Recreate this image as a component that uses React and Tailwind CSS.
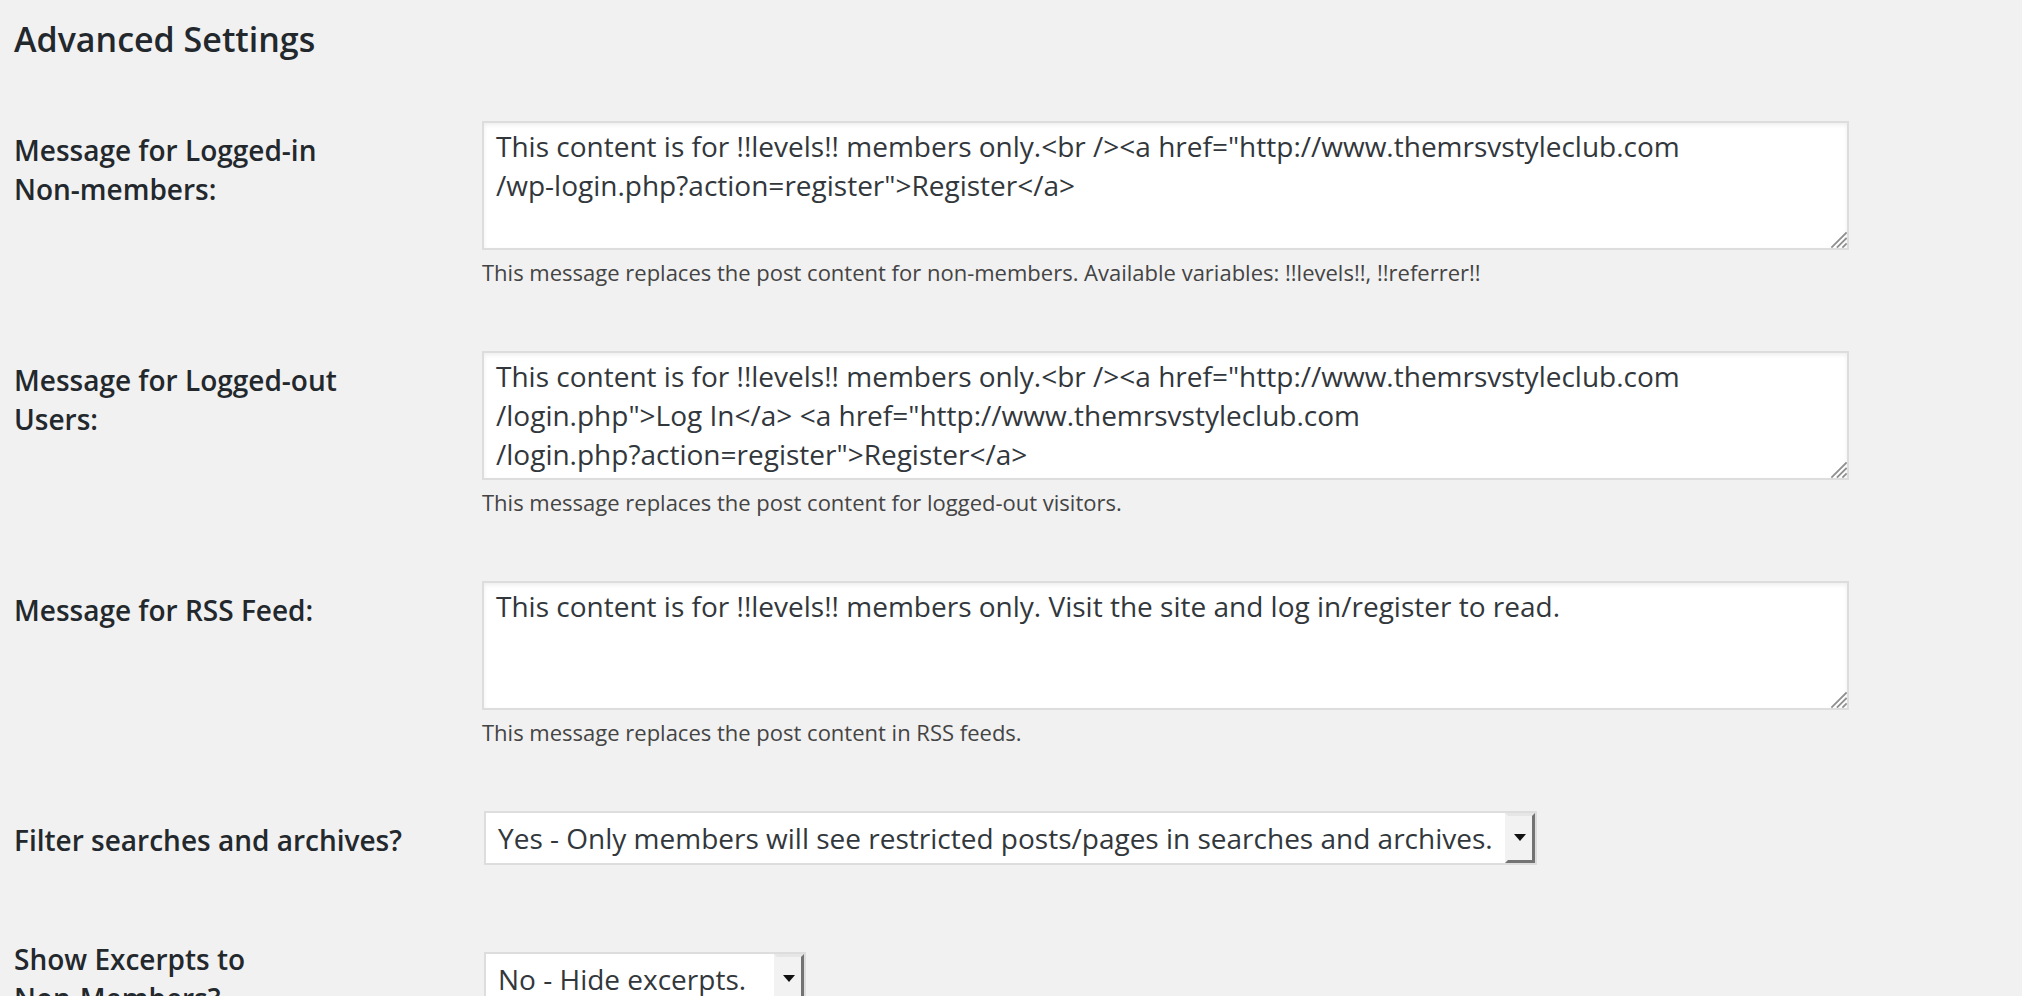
import React from "react";

const FONT = "font-['Open_Sans','Liberation_Sans',sans-serif]";

function ResizeGrip() {
  return (
    <svg
      className="absolute bottom-0 right-0"
      width="18"
      height="18"
      viewBox="0 0 18 18"
    >
      <g stroke="#8f8f8f" strokeWidth="1.8" strokeLinecap="square">
        <line x1="17" y1="3" x2="3" y2="17" />
        <line x1="17" y1="8.5" x2="8.5" y2="17" />
        <line x1="17" y1="14" x2="14" y2="17" />
      </g>
    </svg>
  );
}

function TextBox({ lines }) {
  return (
    <div className="relative h-[129px] w-[1367px] border-2 border-[#dddddd] bg-white px-[12px] py-[4px] text-[28px] leading-[39px] text-[#32373c] shadow-[inset_0_2px_4px_rgba(0,0,0,0.07)]">
      {lines.map((l, i) => (
        <div key={i} className="whitespace-nowrap">
          {l}
        </div>
      ))}
      <ResizeGrip />
    </div>
  );
}

function SelectBox({ value, width }) {
  return (
    <div
      className={`ml-[2px] flex h-[54px] items-stretch border-2 border-[#dddddd] bg-white ${width}`}
    >
      <div className="flex flex-1 items-center whitespace-nowrap pl-[12px] text-[28px] text-[#32373c]">
        {value}
      </div>
      <div className="relative flex w-[30px] items-center justify-center border-[3px] border-t-[#e6e6e6] border-l-[#f2f2f2] border-r-[#737373] border-b-[#737373] bg-[#f2f2f2]">
        <svg width="12" height="8" viewBox="0 0 12 8">
          <path d="M0 0 H12 L6 7 Z" fill="#111" />
        </svg>
      </div>
    </div>
  );
}

function Row({ label, children, middle, lift }) {
  return (
    <div className="flex items-stretch">
      <div className="w-[468px] shrink-0 py-[40px]">
        <div className="whitespace-nowrap text-[28px] font-semibold leading-[39px] text-[#23282d]">
          {label}
        </div>
      </div>
      <div
        className={`flex flex-col ${middle ? "justify-center" : "justify-start"} ${lift ? "pt-[24px] pb-[30px]" : "py-[30px]"}`}
      >
        {children}
      </div>
    </div>
  );
}

function Note({ children }) {
  return (
    <p className="mb-[2px] mt-[6px] text-[22px] leading-[33px] text-[#444444]">
      {children}
    </p>
  );
}

export default function App() {
  return (
    <div className={`min-h-screen bg-[#f1f1f1] pl-[14px] ${FONT}`}>
      <h3 className="pt-[15px] text-[34px] font-semibold leading-[48px] text-[#23282d]">
        Advanced Settings
      </h3>
      <div className="mt-[28px]">
        <Row
          label={
            <>
              Message for Logged-in
              <br />
              Non-members:
            </>
          }
        >
          <TextBox
            lines={[
              'This content is for !!levels!! members only.<br /><a href="http://www.themrsvstyleclub.com',
              '/wp-login.php?action=register">Register</a>',
            ]}
          />
          <Note>
            This message replaces the post content for non-members. Available
            variables: !!levels!!, !!referrer!!
          </Note>
        </Row>

        <Row
          label={
            <>
              Message for Logged-out
              <br />
              Users:
            </>
          }
        >
          <TextBox
            lines={[
              'This content is for !!levels!! members only.<br /><a href="http://www.themrsvstyleclub.com',
              '/login.php">Log In</a> <a href="http://www.themrsvstyleclub.com',
              '/login.php?action=register">Register</a>',
            ]}
          />
          <Note>This message replaces the post content for logged-out visitors.</Note>
        </Row>

        <Row label="Message for RSS Feed:">
          <TextBox
            lines={[
              "This content is for !!levels!! members only. Visit the site and log in/register to read.",
            ]}
          />
          <Note>This message replaces the post content in RSS feeds.</Note>
        </Row>

        <Row label="Filter searches and archives?" middle lift>
          <SelectBox
            width="w-[1053px]"
            value="Yes - Only members will see restricted posts/pages in searches and archives."
          />
        </Row>

        <Row
          label={
            <>
              Show Excerpts to
              <br />
              Non-Members?
            </>
          }
          middle
        >
          <SelectBox width="w-[322px]" value="No - Hide excerpts." />
        </Row>
      </div>
    </div>
  );
}
